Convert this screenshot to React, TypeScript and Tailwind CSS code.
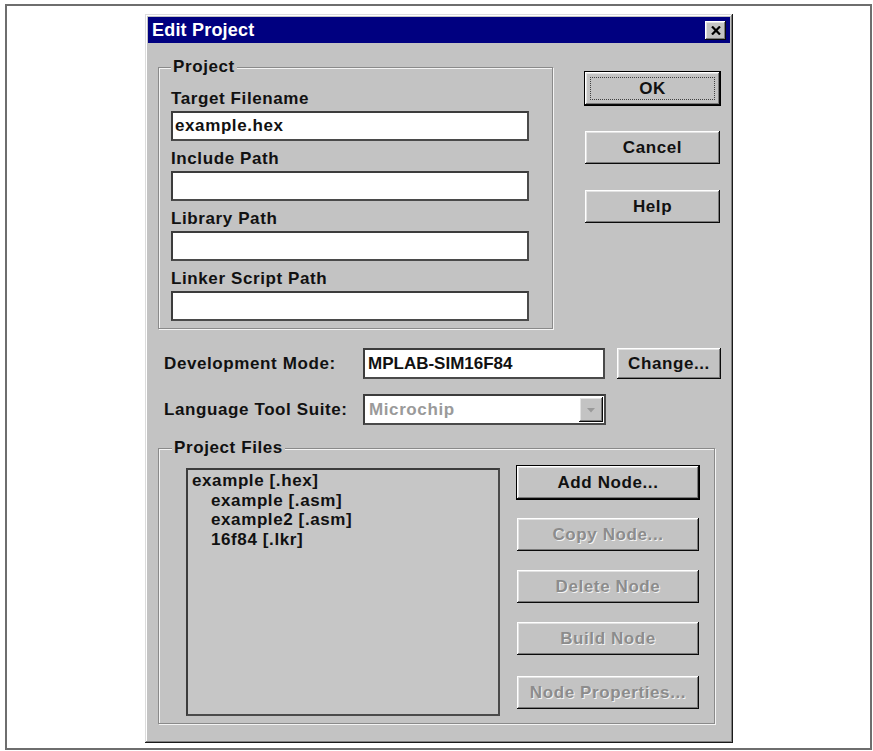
import type { ReactNode } from "react";

const font = "font-['Liberation_Sans',Arial,sans-serif] font-bold text-[17px] tracking-[0.6px]";
const raised =
  "bg-[#c3c3c3] shadow-[inset_-1px_-1px_0_#0a0a0a,inset_1px_1px_0_#ffffff,inset_-2px_-2px_0_#7a7a7a,inset_2px_2px_0_#e2e2e2]";
const sunken = "border-2 border-t-[#3c3c3c] border-l-[#3c3c3c] border-b-[#4a4a4a] border-r-[#4a4a4a]";

function Button({
  children,
  className = "",
  disabled = false,
  isDefault = false,
  focus = false,
}: {
  children: ReactNode;
  className?: string;
  disabled?: boolean;
  isDefault?: boolean;
  focus?: boolean;
}) {
  return (
    <div
      className={`relative flex items-center justify-center ${raised} ${
        isDefault ? "outline outline-1 outline-black" : ""
      } ${className}`}
    >
      {focus && <span className="absolute inset-[5px] border border-dotted border-[#404040]" />}
      <span
        className={
          disabled ? "text-[#8c8c8c] [text-shadow:1px_1px_0_#f4f4f4]" : "text-[#111]"
        }
      >
        {children}
      </span>
    </div>
  );
}

function Field({ label, value = "" }: { label: string; value?: string }) {
  return (
    <div className="flex flex-col">
      <div className="h-[20px] leading-[20px] mb-[2px] text-[#111]">{label}</div>
      <div className={`h-[30px] w-[358px] bg-white ${sunken} flex items-center px-[2px] text-[#111]`}>
        {value}
      </div>
    </div>
  );
}

function Group({
  label,
  labelLeft,
  className = "",
  children,
}: {
  label: string;
  labelLeft: string;
  className?: string;
  children: ReactNode;
}) {
  return (
    <div
      className={`relative border border-[#8a8a8a] shadow-[inset_1px_1px_0_#f4f4f4,1px_1px_0_#f4f4f4] ${className}`}
    >
      <span
        className={`absolute -top-[11px] ${labelLeft} h-[20px] leading-[20px] px-[2px] bg-[#c3c3c3] text-[#111]`}
      >
        {label}
      </span>
      {children}
    </div>
  );
}

export default function App() {
  return (
    <div className={`w-[873px] h-[751px] bg-white pt-[4px] pl-[5px] ${font}`}>
      <div className="w-[867px] h-[746px] border-2 border-[#6e6e6e]">
        <div
          className={`ml-[138px] mt-[8px] w-[588px] h-[729px] p-[3px] bg-[#c3c3c3] shadow-[inset_-1px_-1px_0_#1a1a1a,inset_1px_1px_0_#dcdcdc,inset_-2px_-2px_0_#808080,inset_2px_2px_0_#ffffff]`}
        >
          {/* title bar */}
          <div className="h-[26px] bg-[#000080] flex items-center justify-between pl-[4px] pr-[4px]">
            <span className="text-white text-[18px] tracking-[0.2px]">Edit Project</span>
            <div className={`w-[21px] h-[19px] flex items-center justify-center ${raised}`}>
              <svg width="10" height="9" viewBox="0 0 10 9">
                <path d="M1 0.5 L9 8.5 M9 0.5 L1 8.5" stroke="#000" strokeWidth="2.2" />
              </svg>
            </div>
          </div>

          <div className="pl-[10px] pt-[24px]">
            {/* project + buttons */}
            <div className="flex items-start">
              <Group label="Project" labelLeft="left-[12px]" className="w-[395px] h-[262px] pl-[12px] pt-[21px]">
                <div className="flex flex-col gap-[8px]">
                  <Field label="Target Filename" value="example.hex" />
                  <Field label="Include Path" />
                  <Field label="Library Path" />
                  <Field label="Linker Script Path" />
                </div>
              </Group>
              <div className="ml-[32px] mt-[5px] flex flex-col gap-[26px]">
                <Button isDefault focus className="w-[135px] h-[33px]">OK</Button>
                <Button className="w-[135px] h-[33px]">Cancel</Button>
                <Button className="w-[135px] h-[33px]">Help</Button>
              </div>
            </div>

            {/* development mode */}
            <div className="mt-[19px] flex items-center pl-[6px]">
              <div className="w-[199px] text-[#111]">Development Mode:</div>
              <div className={`w-[242px] h-[31px] bg-white ${sunken} flex items-center px-[3px] text-[#111] tracking-[0px]`}>
                MPLAB-SIM16F84
              </div>
              <Button className="ml-[12px] w-[104px] h-[31px]">Change...</Button>
            </div>

            {/* language tool suite */}
            <div className="mt-[15px] flex items-center pl-[6px]">
              <div className="w-[199px] text-[#111]">Language Tool Suite:</div>
              <div className={`w-[243px] h-[31px] bg-white ${sunken} flex items-center justify-between pl-[4px] pr-[1px]`}>
                <span className="text-[#9a9a9a]">Microchip</span>
                <div className={`w-[24px] h-[25px] flex items-center justify-center ${raised}`}>
                  <svg width="10" height="6" viewBox="0 0 10 6">
                    <path d="M1 1 H9 L5 5.5 Z" fill="#9a9a9a" />
                  </svg>
                </div>
              </div>
            </div>

            {/* project files */}
            <Group
              label="Project Files"
              labelLeft="left-[13px]"
              className="mt-[23px] w-[557px] h-[276px] flex items-start pl-[27px] pt-[19px]"
            >
              <div className={`w-[314px] h-[248px] bg-[#c6c6c6] ${sunken} pl-[4px] pt-[1px] leading-[19.5px] text-[#111]`}>
                <div>example [.hex]</div>
                <div className="pl-[19px]">example [.asm]</div>
                <div className="pl-[19px]">example2 [.asm]</div>
                <div className="pl-[19px]">16f84 [.lkr]</div>
              </div>
              <div className="ml-[17px] -mt-[2px] flex flex-col">
                <Button isDefault className="w-[182px] h-[33px]">Add Node...</Button>
                <Button disabled className="mt-[19px] w-[182px] h-[33px]">Copy Node...</Button>
                <Button disabled className="mt-[19px] w-[182px] h-[33px]">Delete Node</Button>
                <Button disabled className="mt-[19px] w-[182px] h-[33px]">Build Node</Button>
                <Button disabled className="mt-[21px] w-[182px] h-[33px]">Node Properties...</Button>
              </div>
            </Group>
          </div>
        </div>
      </div>
    </div>
  );
}
